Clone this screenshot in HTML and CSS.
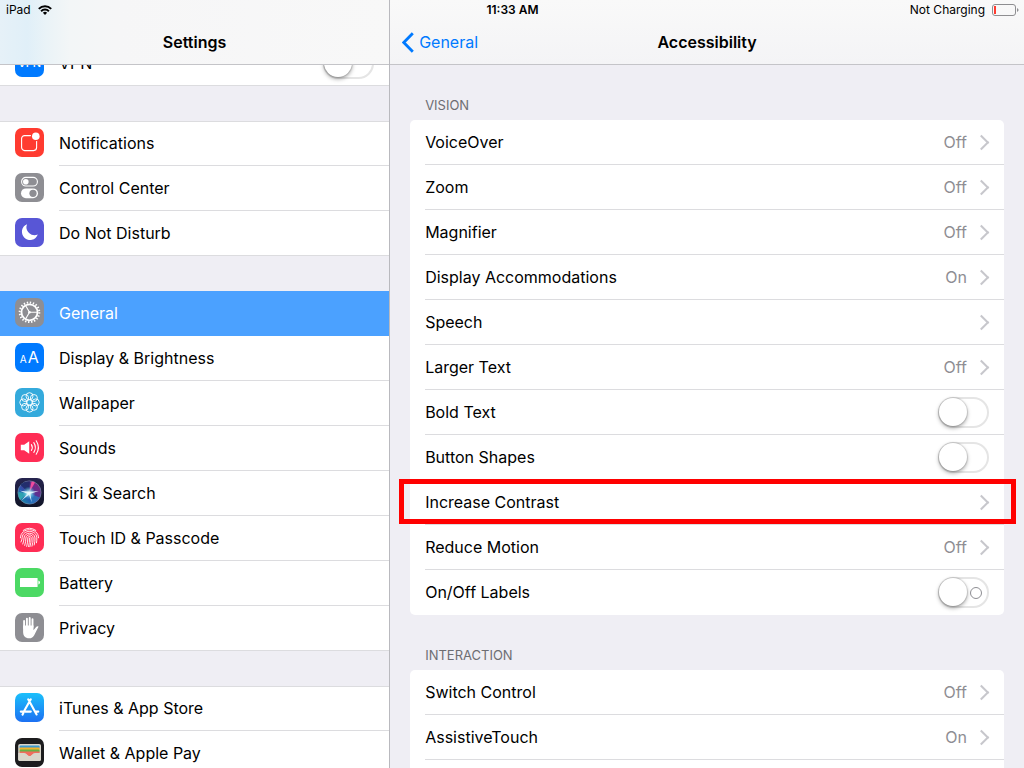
FILE: index.html
```html
<!DOCTYPE html>
<html lang="en">
<head>
	<meta charset="UTF-8">
	<meta name="viewport" content="width=device-width, initial-scale=1">
	<title>Settings</title>
	<link rel="stylesheet" href="styles.css">
</head>
<body>

	<div class="status">
		<div class="status-left">
			<span>iPad</span>
			<svg class="wifi" viewBox="0 0 14 10" aria-hidden="true">
				<g fill="none" stroke="#000" stroke-width="2">
					<path d="M.8 3.9a8.8 8.8 0 0 1 12.4 0"/>
					<path d="M3.1 6.2a5.5 5.5 0 0 1 7.8 0"/>
				</g>
				<path d="M4.9 7.8a3 3 0 0 1 4.2 0L7 10z"/>
			</svg>
		</div>
		<div class="status-time">11:33 AM</div>
		<div class="status-right">
			<span>Not Charging</span>
			<svg class="power" viewBox="0 0 27 12" aria-hidden="true">
				<rect x=".5" y=".5" width="23" height="11" rx="2.5" fill="none" stroke="#8e8e91"/>
				<rect x="2" y="2" width="2" height="8" fill="#ff3b30"/>
				<path d="M25 4q1.6.8 1.6 2T25 8z" fill="#8e8e91"/>
			</svg>
		</div>
	</div>

	<aside class="sidebar">
		<header class="bar bar-tint">
			<h1>Settings</h1>
		</header>
		<nav class="scroll">
			<div class="list">
				<div class="group">
					<div class="row">
						<svg class="icon" viewBox="0 0 29 29" aria-hidden="true">
							<rect width="29" height="29" fill="#007aff"/>
							<text class="glyph" x="14.5" y="19" font-size="11" font-weight="500" text-anchor="middle">VPN</text>
						</svg>
						<div class="cell">
							<label for="vpn">VPN</label>
							<input type="checkbox" class="switch" id="vpn">
						</div>
					</div>
				</div>

				<div class="group">
					<a class="row" href="#notifications">
						<svg class="icon" viewBox="0 0 29 29" aria-hidden="true">
							<rect width="29" height="29" fill="#ff3b30"/>
							<rect x="6.6" y="7.6" width="15" height="15" rx="3" fill="none" stroke="#fff" stroke-width="1.1"/>
							<circle cx="20.8" cy="8.2" r="5" fill="#ff3b30"/>
							<circle cx="20.8" cy="8.2" r="3.8" fill="#fff"/>
						</svg>
						<span class="cell">Notifications</span>
					</a>
					<a class="row" href="#control">
						<svg class="icon" viewBox="0 0 29 29" aria-hidden="true">
							<rect width="29" height="29" fill="#8e8e93"/>
							<rect x="6.6" y="4.4" width="15.8" height="8.6" rx="4.3" fill="none" stroke="#fff" stroke-width="1.1"/>
							<circle cx="10.8" cy="8.7" r="2.8" fill="#fff"/>
							<rect x="6" y="15.4" width="17" height="9.8" rx="4.9" fill="#fff"/>
							<circle cx="18" cy="20.3" r="3.6" fill="#8e8e93"/>
						</svg>
						<span class="cell">Control Center</span>
					</a>
					<a class="row" href="#dnd">
						<svg class="icon" viewBox="0 0 29 29" aria-hidden="true">
							<rect width="29" height="29" fill="#5856d6"/>
							<path fill="#fff" d="M12 6.2a8.2 8.2 0 1 0 10.8 10.4A8.2 8.2 0 0 1 12 6.2z"/>
						</svg>
						<span class="cell">Do Not Disturb</span>
					</a>
				</div>

				<div class="group">
					<a class="row active" href="#general">
						<svg class="icon" viewBox="0 0 29 29" aria-hidden="true">
							<rect width="29" height="29" fill="#8e8e93"/>
							<g fill="none" stroke="#fff">
								<circle cx="14.5" cy="14.3" r="9.8" stroke-width="2" stroke-dasharray="1.4 1.679"/>
								<circle cx="14.5" cy="14.3" r="8" stroke-width="1.8"/>
								<path d="M14.5 14.3H22M14.5 14.3l-3.8-6.5M14.5 14.3l-3.8 6.5" stroke-width="1.1"/>
							</g>
							<circle cx="14.5" cy="14.3" r="1.3" fill="#fff"/>
						</svg>
						<span class="cell">General</span>
					</a>
					<a class="row" href="#display">
						<svg class="icon" viewBox="0 0 29 29" aria-hidden="true">
							<rect width="29" height="29" fill="#007aff"/>
							<text class="glyph" x="4.8" y="20" font-size="10">A</text>
							<text class="glyph" x="12.8" y="20" font-size="16">A</text>
						</svg>
						<span class="cell">Display &amp; Brightness</span>
					</a>
					<a class="row" href="#wallpaper">
						<svg class="icon" viewBox="0 0 29 29" aria-hidden="true">
							<rect width="29" height="29" fill="#34aadc"/>
							<g fill="none" stroke="#fff" stroke-width=".9">
								<circle cx="14.5" cy="8.2" r="3.5"/>
								<circle cx="18.9" cy="10" r="3.5"/>
								<circle cx="20.7" cy="14.4" r="3.5"/>
								<circle cx="18.9" cy="18.8" r="3.5"/>
								<circle cx="14.5" cy="20.6" r="3.5"/>
								<circle cx="10.1" cy="18.8" r="3.5"/>
								<circle cx="8.3" cy="14.4" r="3.5"/>
								<circle cx="10.1" cy="10" r="3.5"/>
								<circle cx="14.5" cy="14.4" r="2.8"/>
							</g>
						</svg>
						<span class="cell">Wallpaper</span>
					</a>
					<a class="row" href="#sounds">
						<svg class="icon" viewBox="0 0 29 29" aria-hidden="true">
							<rect width="29" height="29" fill="#ff2d55"/>
							<path fill="#fff" d="M5.8 11.8h3.4l5-3.6v12.6l-5-3.6H5.8z"/>
							<g fill="none" stroke="#fff" stroke-width="1.1" stroke-linecap="round">
								<path d="M16.4 11.6q1.8 2.9 0 5.8"/>
								<path d="M18.8 9.6q3.2 4.9 0 9.8"/>
								<path d="M21.2 7.8q4.4 6.7 0 13.4"/>
							</g>
						</svg>
						<span class="cell">Sounds</span>
					</a>
					<a class="row" href="#siri">
						<svg class="icon" viewBox="0 0 29 29" aria-hidden="true">
							<defs>
								<linearGradient id="siri-bg" x1="0" y1="0" x2="0" y2="1">
									<stop offset="0" stop-color="#26244f"/>
									<stop offset="1" stop-color="#101426"/>
								</linearGradient>
								<linearGradient id="siri-orb" x1="1" y1="0" x2="0" y2="1">
									<stop offset="0" stop-color="#8c1f70"/>
									<stop offset=".4" stop-color="#5b3193"/>
									<stop offset=".65" stop-color="#235bb0"/>
									<stop offset="1" stop-color="#19a5a4"/>
								</linearGradient>
								<radialGradient id="siri-glow">
									<stop offset="0" stop-color="#fff"/>
									<stop offset=".4" stop-color="#9fe9f5" stop-opacity=".7"/>
									<stop offset="1" stop-color="#40c8e0" stop-opacity="0"/>
								</radialGradient>
							</defs>
							<rect width="29" height="29" fill="url(#siri-bg)"/>
							<circle cx="14.5" cy="14.5" r="11.6" fill="url(#siri-orb)" stroke="#6e88a8" stroke-width=".7"/>
							<path d="M14 15L5 6.5Q10 3 15 3.4z" fill="#172c63" opacity=".8"/>
							<path d="M14 15l2.6-11.4q2 .2 3.4 1z" fill="#ef4b9c"/>
							<path d="M14 15l-9.4 7Q3 18 3.4 14z" fill="#38c7b4" opacity=".6"/>
							<path d="M14 15l10.6 4.4Q21 25 15.6 25.4z" fill="#2b77bd" opacity=".8"/>
							<circle cx="14" cy="15" r="6.5" fill="url(#siri-glow)"/>
							<path d="M14.6 13.8l9.2-.9-8.4 2.9 1.4 8.8-2.8-7.8-7.6 5.6 5.8-6.7-7.4-3z" fill="#e9fcff" opacity=".85"/>
						</svg>
						<span class="cell">Siri &amp; Search</span>
					</a>
					<a class="row" href="#touchid">
						<svg class="icon" viewBox="0 0 29 29" aria-hidden="true">
							<rect width="29" height="29" fill="#ff2d55"/>
							<g fill="none" stroke="#fff" stroke-width=".9" stroke-linecap="round">
								<path d="M8.2 7.4Q14.5 2.9 20.8 7.4"/>
								<path d="M5.4 14.8C5.6 3.9 23.4 3.9 23.6 14.8"/>
								<path d="M6 19q1-2 1.2-4.6c.8-8 13.8-8 14.6 0q.2 2.8-.3 5.4"/>
								<path d="M7.8 21q1.2-3 1.2-6c.4-6.4 10.6-6.4 11 0q.1 3.6-.8 7"/>
								<path d="M9.7 22.4q1.2-3.8 1.2-7.4c.3-4.2 6.9-4.2 7.2 0q.1 4.4-1.1 8.2"/>
								<path d="M11.7 23.4q1.1-4.4 1.1-8.4c.2-2.1 3.2-2.1 3.4 0q0 4.8-1.3 8.7"/>
								<path d="M14.5 15q.1 4.6-.9 8.6"/>
							</g>
						</svg>
						<span class="cell">Touch ID &amp; Passcode</span>
					</a>
					<a class="row" href="#battery">
						<svg class="icon" viewBox="0 0 29 29" aria-hidden="true">
							<rect width="29" height="29" fill="#4cd964"/>
							<rect x="5" y="10" width="17.6" height="9" rx=".6" fill="#fff"/>
							<path fill="#fff" d="M23.4 12.6q1.6.4 1.6 1.9t-1.6 1.9z"/>
						</svg>
						<span class="cell">Battery</span>
					</a>
					<a class="row" href="#privacy">
						<svg class="icon" viewBox="0 0 29 29" aria-hidden="true">
							<rect width="29" height="29" fill="#8e8e93"/>
							<g stroke="#fff" stroke-width="1.9" stroke-linecap="round" fill="none">
								<path d="M9.1 15V8M11.9 14V5.6M14.7 14V4.9M17.5 14V6.3"/>
							</g>
							<path fill="#fff" d="M8.1 12.5h10.4v4.8l2.6-3.2q1.2-1.3 2.5-.5l-4.4 8.6q-1.6 3.1-5 3.1c-4.2 0-6.1-2.8-6.1-6.6z"/>
						</svg>
						<span class="cell">Privacy</span>
					</a>
				</div>

				<div class="group">
					<a class="row" href="#store">
						<svg class="icon" viewBox="0 0 29 29" aria-hidden="true">
							<defs>
								<linearGradient id="store-bg" x1="0" y1="0" x2="0" y2="1">
									<stop offset="0" stop-color="#1bc0fb"/>
									<stop offset="1" stop-color="#1c70f2"/>
								</linearGradient>
							</defs>
							<rect width="29" height="29" fill="url(#store-bg)"/>
							<g fill="none" stroke="#fff" stroke-width="2.1" stroke-linecap="round">
								<path d="M15.8 6.3L9.4 17.6M13.2 6.3l8.4 15.2M5.8 18.6h10M20.4 18.6h2.9M8.3 20.3l-.8 1.3"/>
							</g>
						</svg>
						<span class="cell">iTunes &amp; App Store</span>
					</a>
					<a class="row" href="#wallet">
						<svg class="icon" viewBox="0 0 29 29" aria-hidden="true">
							<rect width="29" height="29" fill="#1c1c1e"/>
							<rect x="3.2" y="6" width="22.8" height="17" rx="1.8" fill="#d9d6cb"/>
							<rect x="4.6" y="7.4" width="20" height="3" rx="1" fill="#3c9bd0"/>
							<rect x="4.6" y="9.4" width="20" height="3" rx="1" fill="#f5b32b"/>
							<rect x="4.6" y="11.4" width="20" height="3" rx="1" fill="#66b046"/>
							<path d="M4.6 13.4h20v3H18l-3.4 2.4-3.4-2.4H4.6z" fill="#f06c5d"/>
							<path d="M3.2 14.9h6q1 0 1.7.6l2.1 1.9q1.6 1.3 3.2 0l2.1-1.9q.7-.6 1.7-.6h6v6.3q0 1.8-1.8 1.8H5q-1.8 0-1.8-1.8z" fill="#d9d6cb"/>
						</svg>
						<span class="cell">Wallet &amp; Apple Pay</span>
					</a>
				</div>
			</div>
		</nav>
	</aside>

	<main class="detail">
		<header class="bar">
			<a class="back" href="#general">
				<svg viewBox="0 0 12 21" aria-hidden="true"><path d="M10.8 1.2L1.8 10.5l9 9.3" fill="none" stroke="#007aff" stroke-width="2.8"/></svg>
				General
			</a>
			<h2>Accessibility</h2>
		</header>
		<div class="scroll content">
			<h3>VISION</h3>
			<div class="card">
				<a class="item more" href="#voiceover"><span>VoiceOver</span><span class="value">Off</span></a>
				<a class="item more" href="#zoom"><span>Zoom</span><span class="value">Off</span></a>
				<a class="item more" href="#magnifier"><span>Magnifier</span><span class="value">Off</span></a>
				<a class="item more" href="#accommodations"><span>Display Accommodations</span><span class="value">On</span></a>
				<a class="item more" href="#speech"><span>Speech</span></a>
				<a class="item more" href="#text"><span>Larger Text</span><span class="value">Off</span></a>
				<div class="item">
					<label for="bold">Bold Text</label>
					<input type="checkbox" class="switch" id="bold">
				</div>
				<div class="item">
					<label for="shapes">Button Shapes</label>
					<input type="checkbox" class="switch" id="shapes">
				</div>
				<a class="item more marked" href="#contrast"><span>Increase Contrast</span></a>
				<a class="item more" href="#motion"><span>Reduce Motion</span><span class="value">Off</span></a>
				<div class="item item-end">
					<label for="labels">On/Off Labels</label>
					<input type="checkbox" class="switch switch-labelled" id="labels">
				</div>
			</div>

			<h3>INTERACTION</h3>
			<div class="card card-open">
				<a class="item more" href="#switch"><span>Switch Control</span><span class="value">Off</span></a>
				<a class="item more" href="#touch"><span>AssistiveTouch</span><span class="value">On</span></a>
			</div>
		</div>
	</main>

</body>
</html>
```
FILE: styles.css
```css
* {
	margin: 0;
	padding: 0;
	box-sizing: border-box;
}

body {
	display: flex;
	height: 100vh;
	overflow: hidden;
	background: #efeef4;
	color: #000;
	font-family: Inter, "Liberation Sans", sans-serif;
	font-size: 16px;
	line-height: 20px;
}

a {
	color: inherit;
	text-decoration: none;
}

/* status bar, lies over both headers */
.status {
	position: absolute;
	top: 0;
	left: 0;
	right: 0;
	z-index: 2;
	display: grid;
	grid-template-columns: 1fr auto 1fr;
	align-items: center;
	height: 20px;
	padding: 0 5px 0 6px;
	font-size: 12px;
}

.status-left,
.status-right {
	display: flex;
	align-items: center;
	gap: 7px;
}

.status-right {
	justify-content: flex-end;
}

.status-time {
	font-weight: 600;
}

.wifi {
	width: 14px;
	height: 10px;
}

.power {
	width: 27px;
	height: 12px;
}

/* panes */
.sidebar {
	display: flex;
	flex-direction: column;
	width: 38.1%;
	border-right: 1px solid #b9b9be;
}

.detail {
	display: flex;
	flex: 1;
	flex-direction: column;
}

.bar {
	display: grid;
	grid-template-columns: 1fr auto 1fr;
	align-items: center;
	flex: none;
	height: 65px;
	padding: 20px 12px 0;
	border-bottom: 1px solid #c4c4c8;
	background: linear-gradient(#f9f9f9, #f4f4f6);
}

.bar-tint {
	background: linear-gradient(90deg, #e6f1f8, #e0eff8 7%, #eaf3f7 12%, #f3f6f7 18%, #f6f6f7 30%, #f8f8f8);
}

.bar h1,
.bar h2 {
	grid-column: 2;
	font-size: 16px;
	font-weight: 600;
}

.back {
	display: flex;
	align-items: center;
	gap: 5px;
	color: #007aff;
}

.back svg {
	width: 12px;
	height: 21px;
}

.scroll {
	flex: 1;
	min-height: 0;
	overflow: hidden;
}

/* left list */
.list {
	display: flex;
	flex-direction: column;
	gap: 35px;
	margin-top: -24px;
}

.group {
	background: #fff;
	box-shadow: inset 0 1px #dcdcdf, inset 0 -1px #dcdcdf;
}

.row {
	display: flex;
	gap: 15px;
	height: 45px;
	padding-left: 15px;
}

.icon {
	flex: none;
	width: 29px;
	height: 29px;
	margin-top: 7px;
	border-radius: 7px;
}

.glyph {
	fill: #fff;
	font-family: Inter, "Liberation Sans", sans-serif;
}

.cell {
	display: flex;
	flex: 1;
	align-items: center;
	justify-content: space-between;
	padding-right: 15px;
	border-bottom: 1px solid #dcdcdf;
}

.active {
	background: #4ba1ff;
	color: #fff;
}

.active .cell {
	border-color: transparent;
}

/* right cards */
.content {
	display: flex;
	flex-direction: column;
	padding: 0 20px;
}

h3 {
	flex: none;
	height: 55px;
	padding: 30px 15px 0;
	color: #6d6d72;
	font-size: 13px;
	font-weight: 400;
}

.card {
	border-radius: 5px;
	background: #fff;
}

/* runs on below the fold */
.card-open {
	flex: 1;
	border-radius: 5px 5px 0 0;
}

.item {
	position: relative;
	display: flex;
	align-items: center;
	height: 45px;
	margin-left: 15px;
	padding-right: 15px;
	border-bottom: 1px solid #dcdcdf;
}

.item-end {
	border-color: transparent;
}

.value {
	color: #8e8e93;
}

.item .switch,
.value {
	margin-left: auto;
}

.more::after {
	content: "";
	width: 9px;
	height: 9px;
	margin: 0 2px 0 9px;
	border: solid #c7c7cc;
	border-width: 2px 2px 0 0;
	transform: rotate(45deg);
}

.more span:only-child {
	margin-right: auto;
}

/* red frame round the item */
.marked::before {
	content: "";
	position: absolute;
	top: -1px;
	right: -12px;
	bottom: 0;
	left: -26px;
	z-index: 1;
	border: 5px solid #f00;
}

.switch {
	appearance: none;
	position: relative;
	flex: none;
	width: 51px;
	height: 31px;
	border: 2px solid #e5e5e5;
	border-radius: 16px;
	background: #fff;
}

.switch::before {
	content: "";
	position: absolute;
	top: -1px;
	left: -1px;
	width: 28px;
	height: 28px;
	border-radius: 50%;
	background: #fff;
	box-shadow: 0 0 1px 1px rgba(0, 0, 0, .12), 0 2px 4px rgba(0, 0, 0, .35);
}

.switch:checked {
	border-color: #4cd964;
	background: #4cd964;
}

.switch:checked::before {
	left: 20px;
}

.switch-labelled::after {
	content: "";
	position: absolute;
	top: 8px;
	right: 5px;
	width: 10px;
	height: 10px;
	border: 1px solid #8e8e93;
	border-radius: 50%;
}
```
